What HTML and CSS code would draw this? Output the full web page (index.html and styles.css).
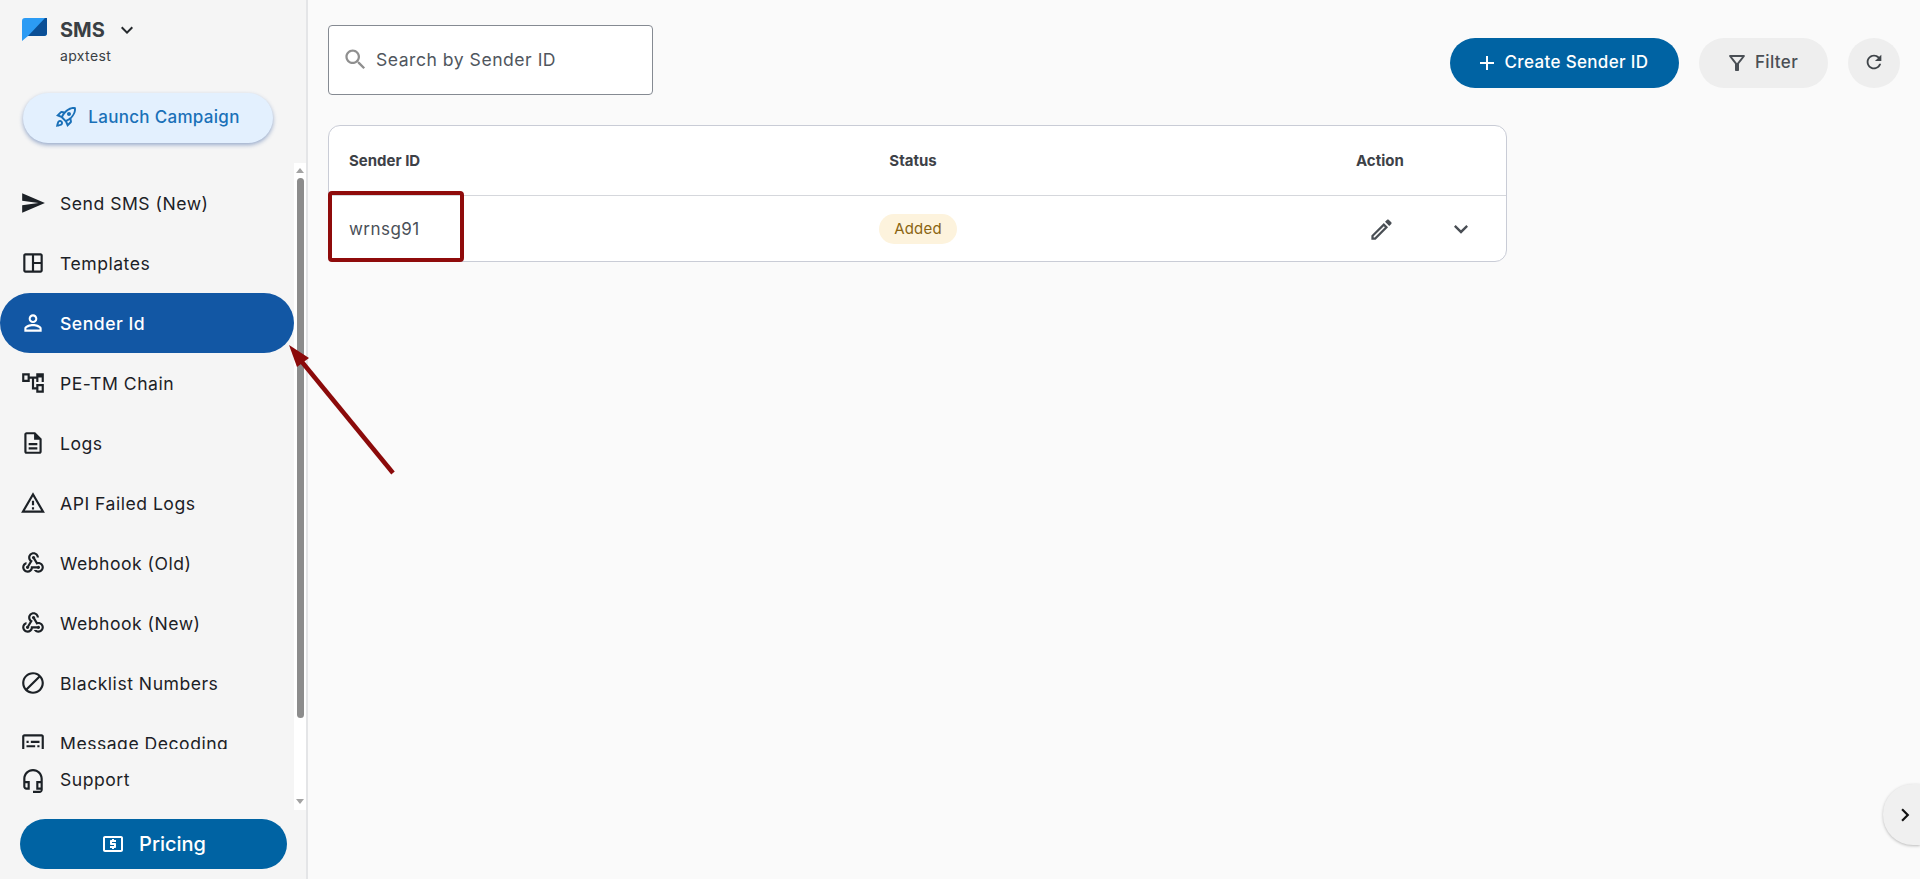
FILE: index.html
```html
<!DOCTYPE html>
<html lang="en">
<head>
<meta charset="utf-8">
<title>Sender Id</title>
<link rel="stylesheet" href="styles.css">
</head>
<body>
<div class="app">
  <aside class="sidebar">
    <div class="brand">
      <svg class="brand-logo" viewBox="0 0 25 23"><path d="M3 0H25V15a3 3 0 0 1-3 3H6L0 23V3a3 3 0 0 1 3-3z" fill="#2b9bf4"/><path d="M25 0V15a3 3 0 0 1-3 3H6L23 0z" fill="#0a4f96"/></svg>
      <div class="brand-text">
        <div class="brand-row"><span class="brand-name">SMS</span><svg class="brand-caret" viewBox="0 0 24 24"><path d="M16.59 8.59 12 13.17 7.41 8.59 6 10l6 6 6-6z"/></svg></div>
        <div class="brand-sub">apxtest</div>
      </div>
    </div>
    <div class="launch-wrap">
      <button class="launch"><svg class="launch-icon" viewBox="0 0 24 24"><path d="M6 15c-.83 0-1.58.34-2.12.88C2.7 17.06 2 22 2 22s4.94-.7 6.12-1.88c.54-.54.88-1.29.88-2.12 0-1.66-1.34-3-3-3zm.71 3.71c-.28.28-2.17.76-2.17.76s.47-1.88.76-2.17c.17-.19.42-.3.7-.3.55 0 1 .45 1 1 0 .28-.11.53-.29.71zm10.71-5.06c6.36-6.36 4.24-11.31 4.24-11.31S16.71.22 10.35 6.58l-2.49-.5c-.65-.13-1.33.08-1.81.55L2 10.69l5 2.14L11.17 17l2.14 5 4.05-4.05c.47-.47.68-1.15.55-1.81l-.51-2.49zM7.41 10.83l-1.91-.82 1.97-1.97 1.44.29c-.57.83-1.08 1.7-1.5 2.5zm6.58 7.67l-.82-1.91c.8-.42 1.67-.93 2.49-1.5l.29 1.44-1.96 1.97zM16 12.24c-1.32 1.32-3.38 2.4-4.04 2.73l-2.93-2.93c.32-.65 1.4-2.71 2.73-4.04 4.68-4.68 8.23-3.85 8.23-3.85s.83 3.55-3.85 8.23zM15 11c1.1 0 2-.9 2-2s-.9-2-2-2-2 .9-2 2 .9 2 2 2z"/></svg>Launch Campaign</button>
    </div>
    <div class="nav-wrap">
      <div class="nav-col">
        <nav class="nav-list">
          <a class="nav-item"><svg class="nav-icon" viewBox="0 0 24 24"><path d="M2.01 21 23 12 2.01 3 2 10l15 2-15 2z"/></svg><span>Send SMS (New)</span></a>
          <a class="nav-item"><svg class="nav-icon" viewBox="0 0 24 24"><path d="M19 3H5c-1.1 0-2 .9-2 2v14c0 1.1.9 2 2 2h14c1.1 0 2-.9 2-2V5c0-1.1-.9-2-2-2zM5 19V5h6v14H5zm14 0h-6v-6h6v6zm0-8h-6V5h6v6z"/></svg><span>Templates</span></a>
          <a class="nav-item active"><svg class="nav-icon" viewBox="0 0 24 24"><path d="M12 5.9c1.16 0 2.1.94 2.1 2.1s-.94 2.1-2.1 2.1S9.9 9.16 9.9 8s.94-2.1 2.1-2.1m0 9c2.97 0 6.1 1.46 6.1 2.1v1.1H5.9V17c0-.64 3.13-2.1 6.1-2.1M12 4C9.79 4 8 5.79 8 8s1.79 4 4 4 4-1.79 4-4-1.79-4-4-4zm0 9c-2.67 0-8 1.34-8 4v3h16v-3c0-2.66-5.33-4-8-4z"/></svg><span>Sender Id</span></a>
          <a class="nav-item"><svg class="nav-icon" viewBox="0 0 24 24"><path d="M22 11V3h-7v3H9V3H2v8h7V8h2v10h4v3h7v-8h-7v3h-2V8h2v3h7zM7 9H4V5h3v4zm10 6h3v4h-3v-4zm0-8h3v4h-3V7z"/></svg><span>PE-TM Chain</span></a>
          <a class="nav-item"><svg class="nav-icon" viewBox="0 0 24 24"><path d="M8 16h8v2H8zm0-4h8v2H8zm6-10H6c-1.1 0-2 .9-2 2v16c0 1.1.89 2 1.99 2H18c1.1 0 2-.9 2-2V8l-6-6zm4 18H6V4h7v5h5v11z"/></svg><span>Logs</span></a>
          <a class="nav-item"><svg class="nav-icon" viewBox="0 0 24 24"><path d="M12 5.99 19.53 19H4.47L12 5.99M12 2 1 21h22L12 2zm1 14h-2v2h2v-2zm0-6h-2v4h2v-4z"/></svg><span>API Failed Logs</span></a>
          <a class="nav-item"><svg class="nav-icon" viewBox="0 0 24 24"><path d="M10 15h5.88c.27-.31.67-.5 1.12-.5.83 0 1.5.67 1.5 1.5s-.67 1.5-1.5 1.5c-.44 0-.84-.19-1.12-.5H11.9c-.46 2.28-2.48 4-4.9 4-2.76 0-5-2.24-5-5 0-2.42 1.72-4.44 4-4.9v2.07c-1.16.41-2 1.53-2 2.83 0 1.65 1.35 3 3 3s3-1.35 3-3v-1zm2.5-11c1.65 0 3 1.35 3 3h2c0-2.76-2.24-5-5-5s-5 2.24-5 5c0 1.43.6 2.71 1.55 3.62l-2.35 3.9c-.68.14-1.2.75-1.2 1.48 0 .83.67 1.5 1.5 1.5s1.5-.67 1.5-1.5c0-.16-.02-.31-.07-.45l3.38-5.63C10.49 9.61 9.5 8.42 9.5 7c0-1.65 1.35-3 3-3zm4.5 9c-.64 0-1.23.2-1.72.54l-3.05-5.07C11.53 8.35 11 7.74 11 7c0-.83.67-1.5 1.5-1.5S14 6.17 14 7c0 .15-.02.29-.06.43l2.19 3.65c.28-.05.57-.08.87-.08 2.76 0 5 2.24 5 5s-2.24 5-5 5c-1.85 0-3.47-1.01-4.33-2.5h2.67c.48.32 1.05.5 1.66.5 1.65 0 3-1.35 3-3s-1.35-3-3-3z"/></svg><span>Webhook (Old)</span></a>
          <a class="nav-item"><svg class="nav-icon" viewBox="0 0 24 24"><path d="M10 15h5.88c.27-.31.67-.5 1.12-.5.83 0 1.5.67 1.5 1.5s-.67 1.5-1.5 1.5c-.44 0-.84-.19-1.12-.5H11.9c-.46 2.28-2.48 4-4.9 4-2.76 0-5-2.24-5-5 0-2.42 1.72-4.44 4-4.9v2.07c-1.16.41-2 1.53-2 2.83 0 1.65 1.35 3 3 3s3-1.35 3-3v-1zm2.5-11c1.65 0 3 1.35 3 3h2c0-2.76-2.24-5-5-5s-5 2.24-5 5c0 1.43.6 2.71 1.55 3.62l-2.35 3.9c-.68.14-1.2.75-1.2 1.48 0 .83.67 1.5 1.5 1.5s1.5-.67 1.5-1.5c0-.16-.02-.31-.07-.45l3.38-5.63C10.49 9.61 9.5 8.42 9.5 7c0-1.65 1.35-3 3-3zm4.5 9c-.64 0-1.23.2-1.72.54l-3.05-5.07C11.53 8.35 11 7.74 11 7c0-.83.67-1.5 1.5-1.5S14 6.17 14 7c0 .15-.02.29-.06.43l2.19 3.65c.28-.05.57-.08.87-.08 2.76 0 5 2.24 5 5s-2.24 5-5 5c-1.85 0-3.47-1.01-4.33-2.5h2.67c.48.32 1.05.5 1.66.5 1.65 0 3-1.35 3-3s-1.35-3-3-3z"/></svg><span>Webhook (New)</span></a>
          <a class="nav-item"><svg class="nav-icon" viewBox="0 0 24 24"><path d="M12 2C6.48 2 2 6.48 2 12s4.48 10 10 10 10-4.48 10-10S17.52 2 12 2zM4 12c0-4.42 3.58-8 8-8 1.85 0 3.55.63 4.9 1.69L5.69 16.9C4.63 15.55 4 13.85 4 12zm8 8c-1.85 0-3.55-.63-4.9-1.69L18.31 7.1C19.37 8.45 20 10.15 20 12c0 4.42-3.58 8-8 8z"/></svg><span>Blacklist Numbers</span></a>
          <a class="nav-item"><svg class="nav-icon" viewBox="0 0 24 24"><path d="M20 4H4c-1.1 0-2 .9-2 2v12c0 1.1.9 2 2 2h16c1.1 0 2-.9 2-2V6c0-1.1-.9-2-2-2zm0 14H4V6h16v12zM6 10h2v2H6zm0 4h8v2H6zm10 0h2v2h-2zm-6-4h8v2h-8z"/></svg><span>Message Decoding</span></a>
        </nav>
        <a class="support"><svg class="nav-icon" viewBox="0 0 24 24"><path fill-rule="evenodd" d="M12 1c-4.97 0-9 4.03-9 9v7c0 1.66 1.34 3 3 3h3v-8H5v-2c0-3.87 3.13-7 7-7s7 3.13 7 7v2h-4v8h4v1h-7v2h6c1.66 0 3-1.34 3-3V10c0-4.97-4.03-9-9-9zM7 14v4H6c-.55 0-1-.45-1-1v-3h2zm12 4h-2v-4h2v4z"/></svg><span>Support</span></a>
      </div>
      <div class="scrollbar">
        <span class="scroll-up"></span>
        <span class="scroll-thumb"></span>
        <span class="scroll-down"></span>
      </div>
    </div>
    <div class="pricing-wrap">
      <button class="pricing"><svg class="pricing-icon" viewBox="0 0 24 24"><path d="M11 17h2v-1h1c.55 0 1-.45 1-1v-3c0-.55-.45-1-1-1h-3v-1h4V8h-2V7h-2v1h-1c-.55 0-1 .45-1 1v3c0 .55.45 1 1 1h3v1H9v2h2v1zm9-13H4c-1.11 0-1.99.89-1.99 2L2 18c0 1.11.89 2 2 2h16c1.11 0 2-.89 2-2V6c0-1.11-.89-2-2-2zm0 14H4V6h16v12z"/></svg>Pricing</button>
    </div>
  </aside>
  <main class="main">
    <div class="toolbar">
      <label class="search">
        <svg class="search-icon" viewBox="0 0 24 24"><path d="M15.5 14h-.79l-.28-.27C15.41 12.59 16 11.11 16 9.5 16 5.91 13.09 3 9.5 3S3 5.91 3 9.5 5.91 16 9.5 16c1.61 0 3.09-.59 4.23-1.57l.27.28v.79l5 4.99L20.49 19l-4.99-5zm-6 0C7.01 14 5 11.99 5 9.5S7.01 5 9.5 5 14 7.01 14 9.5 11.99 14 9.5 14z"/></svg>
        <span>Search by Sender ID</span>
      </label>
      <div class="actions">
        <button class="btn btn-primary"><svg class="btn-icon" viewBox="0 0 24 24"><path d="M19 13h-6v6h-2v-6H5v-2h6V5h2v6h6v2z"/></svg><span>Create Sender ID</span></button>
        <button class="btn btn-grey"><svg class="btn-icon" viewBox="0 0 24 24"><path d="M7 6h10l-5.01 6.3L7 6zm-2.75-.39C6.27 8.2 10 13 10 13v6c0 .55.45 1 1 1h2c.55 0 1-.45 1-1v-6s3.72-4.8 5.74-7.39c.51-.66.04-1.61-.79-1.61H5.04c-.83 0-1.3.95-.79 1.61z"/></svg><span>Filter</span></button>
        <button class="btn-round"><svg class="round-icon" viewBox="0 0 24 24"><path d="M17.65 6.35C16.2 4.9 14.21 4 12 4c-4.42 0-7.99 3.58-7.99 8s3.57 8 7.99 8c3.73 0 6.84-2.55 7.73-6h-2.08c-.82 2.33-3.04 4-5.65 4-3.31 0-6-2.69-6-6s2.69-6 6-6c1.66 0 3.14.69 4.22 1.78L13 11h7V4l-2.35 2.35z"/></svg></button>
      </div>
    </div>
    <div class="table">
      <div class="row row-head">
        <div class="col-id">Sender ID</div>
        <div class="col-status">Status</div>
        <div class="col-action">Action</div>
      </div>
      <div class="row row-body">
        <div class="col-id">wrnsg91</div>
        <div class="col-status"><span class="badge">Added</span></div>
        <div class="col-action col-icons">
          <svg class="edit-icon" viewBox="0 0 24 24"><path d="M3 17.25V21h3.75L17.81 9.94l-3.75-3.75L3 17.25zM5.92 19H5v-.92l9.06-9.06.92.92L5.92 19zM20.71 5.63l-2.34-2.34c-.2-.2-.45-.29-.71-.29s-.51.1-.7.29l-1.83 1.83 3.75 3.75 1.83-1.83c.39-.39.39-1.02 0-1.41z"/></svg>
          <svg class="expand-icon" viewBox="0 0 24 24"><path d="M16.59 8.59 12 13.17 7.41 8.59 6 10l6 6 6-6z"/></svg>
        </div>
      </div>
    </div>
  </main>
</div>
<div class="highlight-box"></div>
<svg class="arrow" viewBox="0 0 120 140"><path d="M110 129 L19 18" stroke="#8b0a0a" stroke-width="4.5" fill="none"/><path d="M6 1 L26 14 L14 23z" fill="#8b0a0a"/></svg>
<div class="collapse"><svg class="collapse-icon" viewBox="0 0 24 24"><path d="M10 6 8.59 7.41 13.17 12l-4.58 4.59L10 18l6-6z"/></svg></div>
</body>
</html>
```
FILE: styles.css
```css
* { box-sizing: border-box; }
html, body { margin: 0; height: 100%; overflow: hidden; }
body { font-family: Inter, "Liberation Sans", sans-serif; background: #fafafa; color: #1c2126; }
button { font-family: inherit; border: 0; cursor: pointer; }
svg { display: block; fill: currentColor; flex: none; }

.app { display: flex; height: 879px; }

/* Sidebar */
.sidebar { width: 308px; flex: none; height: 100%; background: #f5f5f5; border-right: 2px solid #e4e5e7; display: flex; flex-direction: column; }
.brand { height: 93px; padding: 18px 0 0 22px; display: flex; }
.brand-logo { width: 25px; height: 23px; }
.brand-text { margin-left: 13px; }
.brand-row { display: flex; align-items: center; height: 24px; }
.brand-name { font-size: 20px; font-weight: 700; color: #3a3f44; line-height: 24px; }
.brand-caret { width: 24px; height: 24px; margin-left: 10px; color: #25292d; }
.brand-sub { font-size: 14px; line-height: 20px; color: #3a3f44; letter-spacing: .35px; margin-top: 4px; }

.launch-wrap { height: 70px; padding-left: 23px; }
.launch { width: 250px; height: 50px; padding: 0 2px 2px 0; border-radius: 25px; background: #e3f0fe; color: #1a70b8; font-size: 17px; font-weight: 500; letter-spacing: .3px; display: flex; align-items: center; justify-content: center; gap: 10px; box-shadow: 0 2px 4px rgba(40,80,150,.45); }
.launch-icon { width: 24px; height: 24px; }

.nav-wrap { height: 647px; display: flex; }
.nav-col { width: 294px; flex: none; display: flex; flex-direction: column; }
.nav-list { height: 586px; overflow: hidden; padding-top: 10px; flex: none; }
.nav-item { height: 60px; display: flex; align-items: center; padding-left: 20px; font-size: 17.6px; letter-spacing: .5px; color: #1c2126; }
.nav-item span { margin-left: 14px; }
.nav-icon { width: 26px; height: 26px; }
.nav-item.active { background: #1257a4; color: #fff; border-radius: 30px; font-weight: 500; letter-spacing: .5px; }
.support { display: flex; align-items: flex-start; padding: 17px 0 0 20px; font-size: 17.6px; letter-spacing: .5px; line-height: 28px; }
.support span { margin-left: 14px; }
.support .nav-icon { margin-top: 2px; }

.scrollbar { width: 12px; flex: none; background: #fff; display: flex; flex-direction: column; align-items: center; padding-top: 5px; }
.scroll-up { width: 0; height: 0; border: 4.5px solid transparent; border-top: 0; border-bottom: 5px solid #a3a3a3; }
.scroll-thumb { width: 7px; height: 540px; margin-top: 5px; border-radius: 4px; background: #8c8c8c; }
.scroll-down { width: 0; height: 0; margin-top: 81px; border: 4.5px solid transparent; border-bottom: 0; border-top: 5px solid #a3a3a3; }

.pricing-wrap { padding: 9px 0 0 20px; }
.pricing { width: 267px; height: 50px; border-radius: 25px; background: #0063a3; color: #fff; font-size: 20px; font-weight: 500; display: flex; align-items: center; justify-content: center; gap: 14px; }
.pricing-icon { width: 24px; height: 24px; }

/* Main */
.main { flex: 1; min-width: 0; padding: 25px 20px 0 20px; }
.toolbar { display: flex; justify-content: space-between; align-items: flex-start; height: 100px; }
.search { width: 325px; height: 70px; padding-bottom: 1px; background: #fff; border: 1px solid #858a92; border-radius: 4px; display: flex; align-items: center; padding-left: 13px; font-size: 17.6px; color: #50565e; letter-spacing: .5px; }
.search-icon { width: 27px; height: 27px; color: #8f8f8f; margin-right: 7px; }
.actions { display: flex; gap: 20px; margin-top: 13px; }
.btn { height: 50px; border-radius: 25px; display: flex; align-items: center; justify-content: center; font-size: 17px; font-weight: 500; letter-spacing: .35px; }
.btn span { margin-top: -2px; }
.btn-icon { width: 24px; height: 24px; }
.round-icon { width: 22px; height: 22px; }
.btn-primary { width: 229px; padding-right: 12px; background: #0063a3; color: #fff; gap: 6px; }
.btn-grey { width: 129px; padding-right: 10px; background: #eeeeee; color: #4a4f55; gap: 6px; }
.btn-round { width: 52px; height: 50px; border-radius: 50%; background: #eeeeee; color: #3f4449; display: flex; align-items: center; justify-content: center; padding: 0 0 2px; }

.table { width: 1179px; height: 137px; background: #fff; border: 1px solid #c9ccd6; border-radius: 12px; overflow: hidden; }
.row { display: flex; align-items: center; }
.row-head { height: 70px; border-bottom: 1px solid #d5d7dc; font-size: 15px; font-weight: 700; color: #3d4147; }
.row-body { height: 65px; font-size: 17px; color: #4a5058; letter-spacing: .45px; }
.col-id { width: 280px; padding-left: 20px; }
.col-status { width: 608px; text-align: center; }
.row-body .col-status { padding-left: 10px; }
.col-action { width: 289px; padding-left: 139px; }
.col-icons { display: flex; align-items: center; padding-left: 151px; gap: 52px; color: #4a4f55; }
.edit-icon { width: 27px; height: 27px; margin-top: 2px; }
.expand-icon { width: 28px; height: 28px; }
.badge { display: inline-block; height: 30px; line-height: 30px; padding: 0 15px; border-radius: 15px; background: #fdf3dd; color: #8a6512; font-size: 15px; letter-spacing: .2px; font-weight: 400; }

/* Annotations and floating controls */
.highlight-box { position: absolute; left: 328px; top: 191px; width: 136px; height: 71px; border: 4px solid #8f0b0b; border-radius: 4px; }
.arrow { position: absolute; left: 283px; top: 344px; width: 120px; height: 140px; }
.collapse { position: absolute; right: 0; top: 784px; width: 37px; height: 61px; background: #f0f0f0; border-radius: 30px 0 0 30px; box-shadow: 0 1px 3px rgba(0,0,0,.25); display: flex; align-items: center; padding-left: 9px; color: #111; }
.collapse-icon { width: 26px; height: 26px; }
```
